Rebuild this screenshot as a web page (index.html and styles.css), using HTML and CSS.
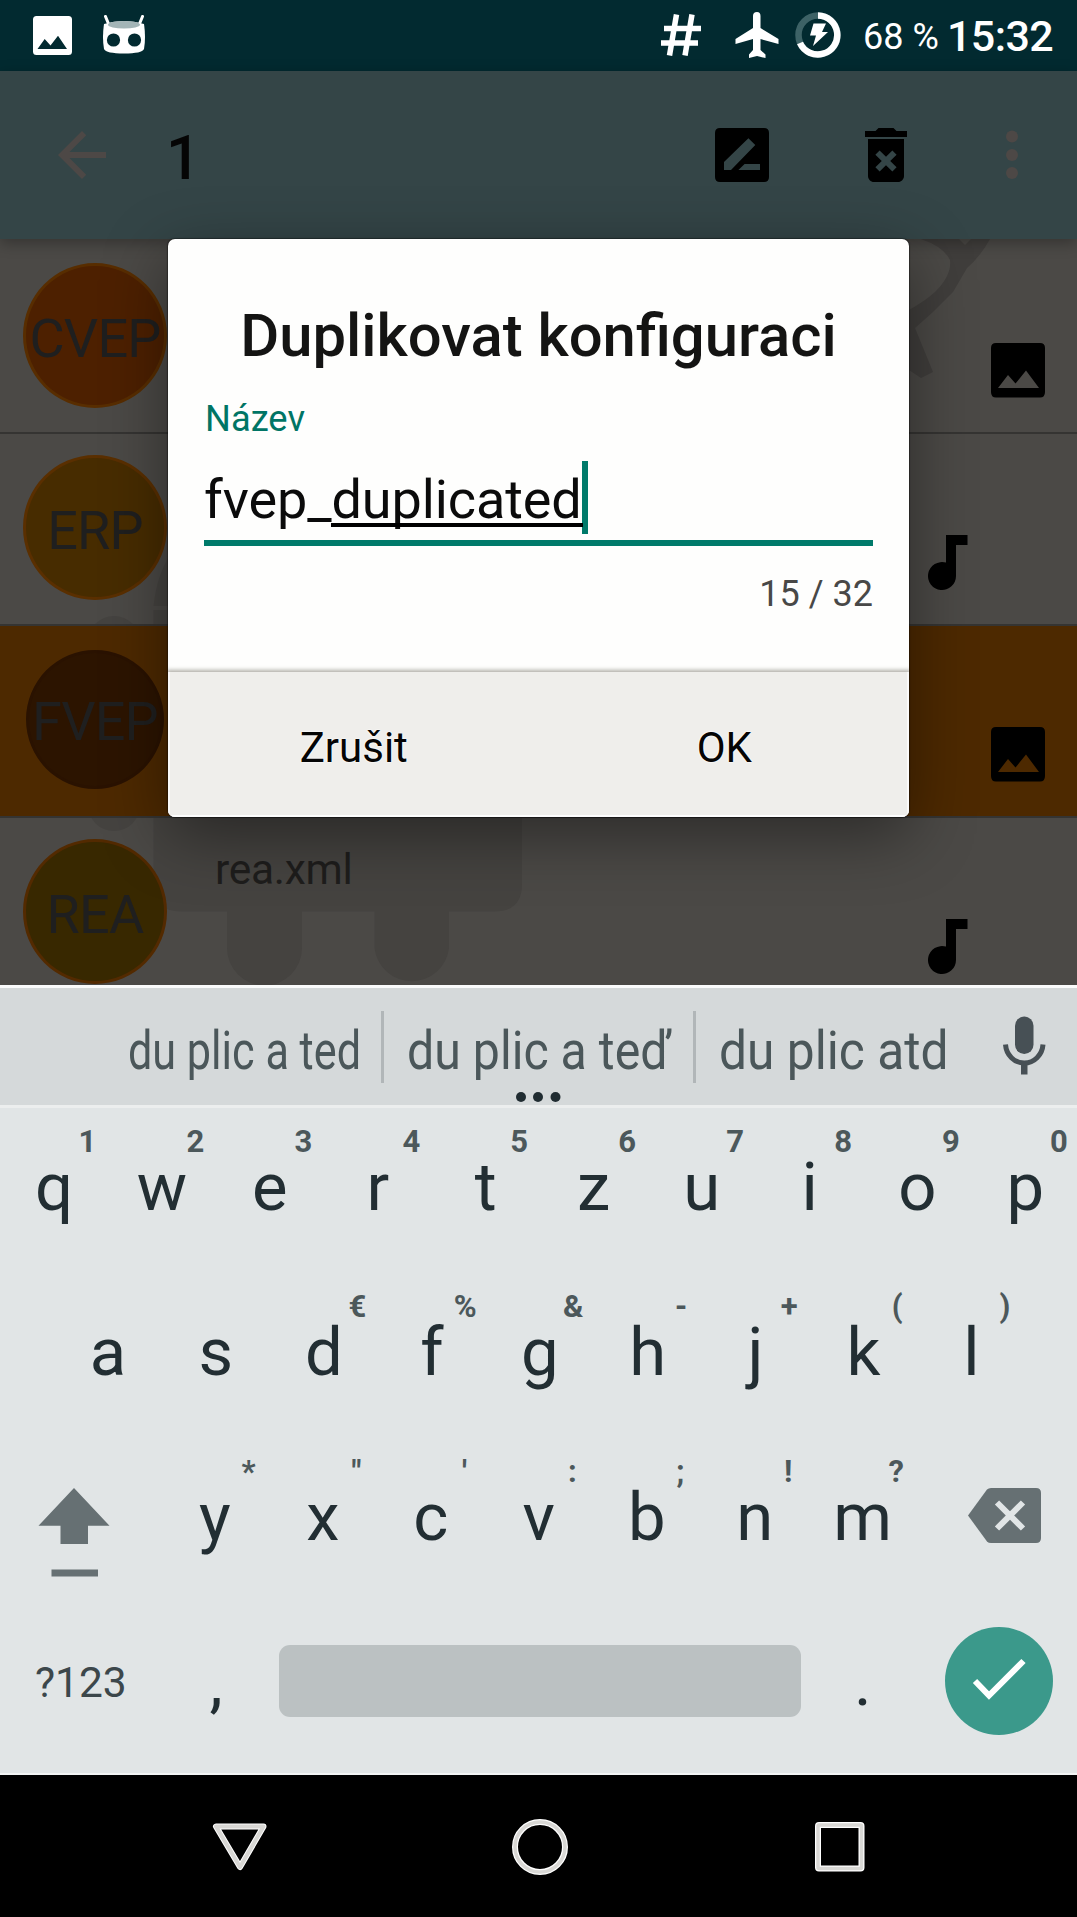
FILE: index.html
```html
<!DOCTYPE html>
<html lang="cs">
<head>
<meta charset="utf-8">
<title>Duplikovat konfiguraci</title>
<link rel="stylesheet" href="styles.css">
</head>
<body>
<svg class="defs" width="0" height="0" aria-hidden="true">
  <symbol id="picture" viewBox="0 0 72 72"><path fill-rule="evenodd" d="M14 9H58Q63 9 63 14V58Q63 63.500 58 63.500H14Q9 63.500 9 58V14Q9 9 14 9ZM16 54H57L44 36.500L33.500 49.500L26 41Z"/></symbol>
  <symbol id="note" viewBox="0 0 40 56"><path d="M18 0H39.500V10H28V41A14 14 0 1 1 18 27.600Z"/></symbol>
</svg>
<div class="screen">
  <header class="status">
    <svg class="status-image" viewBox="0 0 39 40"><path fill="#fff" fill-rule="evenodd" d="M3.500 0H35.500Q39 0 39 3.500V35.500Q39 39 35.500 39H3.500Q0 39 0 35.500V3.500Q0 0 3.500 0ZM4.500 33H34L25 19.700L17.500 29.500L11.700 23Z"/></svg>
    <svg class="status-cid" viewBox="0 0 44 40"><path d="M3.500 1.500L7 10M40.500 1.500L37 10" stroke="#fff" stroke-width="3" stroke-linecap="round"/><path fill="#fff" d="M2 9Q22 3 42 9Q44 22 42 34Q40 38.500 22 38.500Q4 38.500 2 34Q0 22 2 9Z"/><ellipse cx="22" cy="9.800" rx="16" ry="3.800" fill="#a3b5b7"/><circle cx="11.500" cy="25" r="6.600" fill="#022a30"/><circle cx="32.500" cy="25" r="6.600" fill="#022a30"/></svg>
    <svg class="status-hash" viewBox="0 0 40 42"><path d="M15.500 0.500L8.500 41.500M31 0.500L24 41.500M3 14.500H40M0 29H37" stroke="#fff" stroke-width="5.500"/></svg>
    <svg class="status-plane" viewBox="0 0 44 46"><path fill="#fff" d="M18 4Q18 0 22 0Q25.500 0 25.500 4V16L43.500 27V32L25.500 27V38L30.500 42.500V46L22 44L14 46V42.500L18 38V27L.500 32V27L18 16Z"/></svg>
    <svg class="status-battery" viewBox="0 0 46 46"><circle cx="23" cy="23" r="19.500" fill="none" stroke="#3d6266" stroke-width="6.500"/><path d="M23 3.500A19.500 19.500 0 1 1 5 31" fill="none" stroke="#fff" stroke-width="6.500"/><path fill="#fff" d="M18.500 11.500H31L27 20H33L18 34L21 23.500H15Z"/></svg>
    <span class="percent">68 %</span>
    <span class="clock">15:32</span>
  </header>
  <div class="appbar">
    <svg class="back" viewBox="0 0 24 24"><path fill="#4d4846" d="M20 11H7.830l5.590-5.590L12 4l-8 8 8 8 1.410-1.410L7.830 13H20v-2z"/></svg>
    <span class="count">1</span>
    <svg class="edit" viewBox="0 0 72 72"><path fill-rule="evenodd" d="M14 9H58Q63 9 63 14V58Q63 63 58 63H14Q9 63 9 58V14Q9 9 14 9ZM18 43V51H25L49.300 26L42.400 19.300ZM32.400 51L38.600 45H54V51Z"/></svg>
    <svg class="trash" viewBox="0 0 24 24"><path d="M6 19c0 1.100.9 2 2 2h8c1.100 0 2-.9 2-2V6.700H6V19zm2.460-7.120l1.410-1.410L12 12.590l2.120-2.120 1.410 1.410L13.410 14l2.120 2.120-1.410 1.410L12 15.410l-2.120 2.120-1.410-1.410L10.590 14l-2.130-2.120zM15.500 4l-1-1h-5l-1 1H5v2h14V4z"/></svg>
    <svg class="more" viewBox="0 0 12 50"><circle cx="6" cy="6.500" r="6"/><circle cx="6" cy="25" r="6"/><circle cx="6" cy="43" r="6"/></svg>
  </div>
  <main class="list">
    <svg class="watermark" viewBox="0 239 1077 746">
      <path fill="#454340" d="M153.500 610V884Q153.500 911.500 181 911.500H227V948A37.500 37.500 0 0 0 302 948V911.500H374.500V948A37.500 37.500 0 0 0 449 948V911.500H494Q522 911.500 522 884V610ZM88 642A26 26 0 0 1 140 642V805A26 26 0 0 1 88 805ZM153.500 606Q157 575 170 555V606Z"/>
      <path fill="#403e3c" d="M921 239Q944 247 950 260Q952 275 935 292Q925 301 909 310V370L921 378L933 372L915 328L933 312L953 292L967 268Q980 257 990 239H971L965 245L959 239Z"/>
    </svg>
    <div class="row first"><span class="avatar cvep">CVEP</span><svg class="pic"><use href="#picture"/></svg></div>
    <div class="row"><span class="avatar erp">ERP</span><svg class="mus"><use href="#note"/></svg></div>
    <div class="row selected"><span class="avatar fvep">FVEP</span><svg class="pic"><use href="#picture"/></svg></div>
    <div class="row last"><span class="avatar rea">REA</span><span class="file">rea.xml</span><svg class="mus"><use href="#note"/></svg></div>
  </main>
  <section class="keyboard">
    <div class="suggest">
      <svg class="words" viewBox="0 0 1077 117">
        <g font-size="54" fill="#4b575a">
          <text x="128" y="81" textLength="233" lengthAdjust="spacingAndGlyphs">du plic a ted</text>
          <text x="407" y="81" textLength="264" lengthAdjust="spacingAndGlyphs">du plic a teď</text>
          <text x="719" y="81" textLength="229.500" lengthAdjust="spacingAndGlyphs">du plic atd</text>
        </g>
        <path d="M382.500 23V95M694.500 23V95" stroke="#b1b6b8" stroke-width="3"/>
        <g fill="#202c31"><circle cx="521" cy="109" r="5"/><circle cx="538" cy="109" r="5"/><circle cx="555.500" cy="109" r="5"/></g>
        <g fill="#475055"><rect x="1015" y="28.500" width="18.500" height="37.500" rx="9.200"/><path d="M1021 75H1027.500V86.500H1021Z"/><path d="M1005.500 56.500A18.800 20 0 0 0 1043 56.500" fill="none" stroke="#475055" stroke-width="5"/></g>
      </svg>
    </div>
    <div class="keys r1"><span class="key">q<i>1</i></span><span class="key">w<i>2</i></span><span class="key">e<i>3</i></span><span class="key">r<i>4</i></span><span class="key">t<i>5</i></span><span class="key">z<i>6</i></span><span class="key">u<i>7</i></span><span class="key">i<i>8</i></span><span class="key">o<i>9</i></span><span class="key">p<i>0</i></span></div>
    <div class="keys r2"><span class="key">a</span><span class="key">s</span><span class="key">d<i>€</i></span><span class="key">f<i>%</i></span><span class="key">g<i>&amp;</i></span><span class="key">h<i>-</i></span><span class="key">j<i>+</i></span><span class="key">k<i>(</i></span><span class="key">l<i>)</i></span></div>
    <div class="keys r3">
      <svg class="shift" viewBox="0 0 72 90"><path fill="#667073" d="M36 0L71.500 37.700H50V56H22.500V37.700H.500ZM13.500 81.500H60V88.500H13.500Z"/></svg>
      <span class="key">y<i>*</i></span><span class="key">x<i>"</i></span><span class="key">c<i>'</i></span><span class="key">v<i>:</i></span><span class="key">b<i>;</i></span><span class="key">n<i>!</i></span><span class="key">m<i>?</i></span>
      <svg class="erase" viewBox="0 0 73 55"><path fill="#667073" d="M19 1.500Q20.500 0 23 0H68Q73 0 73 5V50Q73 55 68 55H23Q20.500 55 19 53.500L0 27.500Z"/><path d="M29 14.500L55 40.500M55 14.500L29 40.500" stroke="#e1e5e6" stroke-width="6"/></svg>
    </div>
    <div class="keys r4">
      <span class="sym">?123</span><span class="key">,</span><span class="space"></span><span class="key">.</span>
      <svg class="done" viewBox="0 0 108 108"><circle cx="54" cy="54" r="54" fill="#3b998b"/><path d="M30 54L44 68.500L78.500 34" fill="none" stroke="#fff" stroke-width="6"/></svg>
    </div>
  </section>
  <nav class="nav">
    <svg viewBox="0 0 56 48"><path d="M4 3.500H51.500L28 44Z" fill="none" stroke="#fff" stroke-width="6" stroke-linejoin="round"/><path d="M4 3.500H51.500L28 44Z" fill="none" stroke="#d9d8d5" stroke-width="4" stroke-linejoin="round"/></svg>
    <svg class="home" viewBox="0 0 56 56"><circle cx="28" cy="28" r="25" fill="none" stroke="#fff" stroke-width="6"/><circle cx="28" cy="28" r="25" fill="none" stroke="#d9d8d5" stroke-width="3.500"/></svg>
    <svg class="recent" viewBox="0 0 50 50"><rect x="3" y="3" width="43.500" height="43.500" rx="1" fill="none" stroke="#fff" stroke-width="6"/><rect x="3" y="3" width="43.500" height="43.500" rx="1" fill="none" stroke="#d9d8d5" stroke-width="3.500"/></svg>
  </nav>
  <div class="dialog">
    <h1>Duplikovat konfiguraci</h1>
    <label>Název</label>
    <div class="field"><span>fvep_</span><span class="composing">duplicated</span><span class="caret"></span></div>
    <div class="counter">15 / 32</div>
    <div class="actions"><button>Zrušit</button><button>OK</button></div>
  </div>
</div>
</body>
</html>
```
FILE: styles.css
```css
* { box-sizing: border-box; }
body { margin: 0; background: #000; font-family: Roboto, "Liberation Sans", sans-serif; }
svg { display: block; flex: none; }
.defs { position: absolute; }
.screen { position: relative; width: 1077px; height: 1917px; display: flex; flex-direction: column; overflow: hidden; }

.status { height: 71px; background: #022a30; display: flex; align-items: flex-start; color: #fff; white-space: nowrap; }
.status-image { width: 39px; height: 40px; margin: 16px 0 0 33px; }
.status-cid { width: 44px; height: 40px; margin: 15px 0 0 30px; }
.status-hash { width: 40px; height: 42px; margin: 14px 0 0 515px; }
.status-plane { width: 44px; height: 46px; margin: 12px 0 0 34px; }
.status-battery { width: 46px; height: 46px; margin: 12px 0 0 16px; }
.percent { width: 74px; margin: 0 0 0 22px; font-size: 36px; line-height: 74px; }
.clock { margin-left: 10px; font-size: 43px; font-weight: 500; line-height: 72px; letter-spacing: -.6px; }

.appbar { position: relative; z-index: 1; height: 168px; background: #344547; display: flex; align-items: flex-start; box-shadow: 0 4px 14px rgba(0,0,0,.3); }
.back, .edit, .trash { width: 72px; height: 72px; margin-top: 48px; }
.back { margin-left: 46px; }
.count { width: 42px; margin-left: 48px; font-size: 61px; font-weight: 500; line-height: 174px; color: #050505; }
.edit { margin-left: 498px; }
.trash { margin-left: 72px; }
.more { width: 12px; height: 50px; margin: 59px 0 0 84px; fill: #4d4846; }

.list { position: relative; height: 746px; background: #4b4946; overflow: hidden; }
.watermark { position: absolute; left: 0; top: 0; width: 1077px; height: 746px; }
.row { position: relative; display: grid; grid-template-columns: 144px 713px 102px 72px; align-items: start; height: 192px; padding-left: 23px; border-bottom: 2px solid #353432; }
.first { height: 195px; padding-top: 3px; }
.selected { background: #4d2900; }
.last { height: 167px; border: 0; }
.avatar { width: 144px; height: 145px; margin-top: 21px; border-radius: 50%; border: 3px solid #552c00; display: flex; justify-content: center; font-size: 54px; letter-spacing: -.8px; line-height: 145px; color: #1f1f1f; }
.cvep { background: #4d2000; border-color: #582d00; }
.erp { background: #472c00; border-color: #5a2f00; }
.fvep { width: 138px; height: 139px; margin: 24px 0 0 3px; background: #2c1400; border-color: #2a1200; line-height: 137px; }
.rea { background: #382800; border-color: #532a00; }
.file { margin-top: 17px; padding-left: 48px; font-size: 42.500px; letter-spacing: -.3px; line-height: 70px; color: #1e1d1c; }
.pic, .mus { grid-row: 1; }
.pic { grid-column: 4; width: 72px; height: 72px; margin-top: 92px; }
.mus { grid-column: 3; width: 40px; height: 56px; margin: 101px 0 0 48px; }

.keyboard { height: 790px; background: #e1e5e6; border-top: 3px solid #fafbfb; border-bottom: 2px solid #f3f5f5; }
.suggest { height: 120px; background: #d5d9da; border-bottom: 3px solid #eceeee; }
.words { width: 1077px; height: 117px; }
.keys { display: flex; color: #222e33; }
.key { position: relative; flex: none; width: 107.950px; text-align: center; font-size: 67px; }
.key i { position: absolute; left: 57.500px; top: calc(50% - 65px); width: 60px; height: 40px; font: bold 31px/40px Roboto, sans-serif; color: #4c585b; }
.r1 { height: 161px; line-height: 159px; }
.r1 .key { height: 157px; }
.r2 { height: 165px; line-height: 167px; padding-left: 54px; }
.r2 .key { height: 165px; }
.r3 { height: 166px; line-height: 166px; }
.shift { width: 72px; height: 90px; margin: 54px 51px 0 38px; }
.erase { width: 73px; height: 55px; margin: 53.500px 0 0 51px; }
.r4 { height: 170px; line-height: 164px; }
.sym { flex: none; width: 162px; padding-left: 35px; font-size: 42.500px; color: #3c474b; line-height: 165px; }
.space { flex: none; width: 522px; height: 72px; margin: 45px 8px 0 9px; border-radius: 11px; background: #bbc1c2; }
.done { width: 108px; height: 108px; margin: 26.500px 0 0 28px; }

.nav { height: 142px; background: #000; display: flex; align-items: flex-start; }
.nav svg { width: 56px; height: 48px; margin: 48px 0 0 212px; }
.nav .home { height: 56px; margin: 44px 0 0 244px; }
.nav .recent { width: 50px; height: 50px; margin: 47px 0 0 247px; }

.dialog { position: absolute; z-index: 2; left: 168px; top: 239px; width: 741px; height: 578px; border-radius: 7px; background: #fefefd; box-shadow: 0 0 1px 1px rgba(0,0,0,.35), 0 18px 65px rgba(0,0,0,.42); display: flex; flex-direction: column; overflow: hidden; }
.dialog h1 { margin: 55px 0 0; height: 85px; text-align: center; font-size: 59.800px; font-weight: 500; line-height: 84px; color: #141413; white-space: nowrap; }
.dialog label { margin: 14px 0 0 37px; height: 50px; font-size: 36.300px; line-height: 52px; color: #007565; }
.field { position: relative; margin: 0 36px; height: 103px; border-bottom: 6px solid #007a6a; display: flex; font-size: 54px; letter-spacing: -.1px; line-height: 113px; color: #0b0b0b; }
.composing { position: relative; }
.composing::after { content: ""; position: absolute; left: 0; right: -1px; top: 80px; height: 4px; background: #000; }
.caret { width: 6px; height: 73px; margin-top: 18px; background: #007a6a; }
.counter { margin: 18px 36px 0 0; text-align: right; font-size: 36px; line-height: 60px; color: #484847; }
.actions { margin-top: auto; height: 145px; display: flex; background: #efeeeb; border-bottom: 2px solid #fdfdfd; box-shadow: inset 2px 0 #fafafa, inset -2px 0 #fafafa, 0 -1px 4px 1px rgba(60,55,40,.4); }
.actions button { flex: 1; border: 0; background: none; padding: 2px 0 0 1px; font: 42px/148px Roboto, sans-serif; color: #050505; text-shadow: 0 0 2px #fff, 0 0 2px #fff; }
```
